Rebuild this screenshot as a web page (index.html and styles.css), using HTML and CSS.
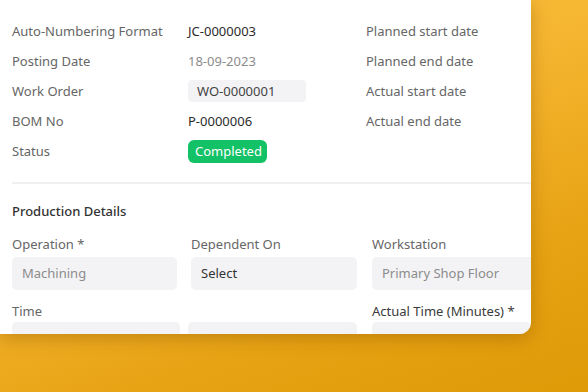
FILE: index.html
```html
<!DOCTYPE html>
<html lang="en">
<head>
  <meta charset="UTF-8" />
  <title>Job Card</title>
  <link rel="stylesheet" href="styles.css">
</head>
<body>
  <div class="card">
    <div class="info">
      <span class="label">Auto-Numbering Format</span>
      <span class="value">JC-0000003</span>
      <span class="label">Planned start date</span>

      <span class="label">Posting Date</span>
      <span class="value muted">18-09-2023</span>
      <span class="label">Planned end date</span>

      <span class="label">Work Order</span>
      <span class="value"><span class="chip">WO-0000001</span></span>
      <span class="label">Actual start date</span>

      <span class="label">BOM No</span>
      <span class="value">P-0000006</span>
      <span class="label">Actual end date</span>

      <span class="label">Status</span>
      <span class="value"><span class="badge">Completed</span></span>
      <span class="label"></span>
    </div>

    <div class="divider"></div>

    <div class="section">
      <h3>Production Details</h3>
      <div class="fields row-a">
        <div class="field">
          <label>Operation *</label>
          <div class="input muted">Machining</div>
        </div>
        <div class="field">
          <label>Dependent On</label>
          <div class="input">Select</div>
        </div>
        <div class="field">
          <label>Workstation</label>
          <div class="input muted">Primary Shop Floor</div>
        </div>
      </div>
      <div class="fields row-b">
        <div class="field">
          <label>Time</label>
          <div class="input"></div>
        </div>
        <div class="field">
          <label>&nbsp;</label>
          <div class="input"></div>
        </div>
        <div class="field">
          <label class="strong">Actual Time (Minutes) *</label>
          <div class="input"></div>
        </div>
      </div>
    </div>
  </div>
</body>
</html>
```

FILE: styles.css
```css
body {
  margin: 0;
  width: 588px;
  height: 392px;
  overflow: hidden;
  font-family: 'Noto Sans', sans-serif;
  font-size: 13px;
  color: #2b2b2b;
  background: linear-gradient(160deg, #fcc545 0%, #f5b530 40%, #e6a212 75%, #df9a08 100%);
}
.card {
  width: 531px;
  height: 334px;
  background: white;
  border-bottom-right-radius: 12px;
  box-shadow: 0 4px 18px rgba(120, 70, 0, 0.35);
  overflow: hidden;
}
.info {
  display: grid;
  grid-template-columns: 176px 178px 1fr;
  grid-auto-rows: 30px;
  align-items: center;
  padding: 16px 0 0 12px;
}
.label {
  color: #666;
}
.value {
  color: #2b2b2b;
}
.muted {
  color: #8c8c8c;
}
.chip {
  display: inline-block;
  width: 109px;
  height: 22px;
  line-height: 22px;
  padding-left: 9px;
  background: #f3f3f5;
  border-radius: 4px;
  color: #444;
}
.badge {
  display: inline-block;
  height: 23px;
  line-height: 23px;
  padding: 0 5px 0 7px;
  background: #13c166;
  color: white;
  border-radius: 6px;
}
.divider {
  height: 2px;
  background: #f0f0f0;
  margin: 16px 0 0 12px;
}
.section {
  padding-left: 12px;
}
h3 {
  margin: 17px 0 0;
  font-size: 13px;
  line-height: 20px;
  font-weight: 500;
  color: #333;
}
.fields {
  display: grid;
}
.row-a {
  grid-template-columns: 165px 166px 166px;
  column-gap: 14px;
  margin-top: 14px;
}
.row-a .field:last-child {
  margin-left: 1px;
}
.row-b {
  grid-template-columns: 168px 169px 166px;
  column-gap: 8px;
  margin-top: 12px;
}
.row-b .field:last-child {
  margin-left: 7px;
}
.field label {
  display: block;
  height: 18px;
  line-height: 18px;
  color: #666;
}
.field label.strong {
  color: #3a3a3a;
}
.row-a .input {
  margin-top: 4px;
}
.row-b .input {
  margin-top: 2px;
}
.input {
  height: 33px;
  line-height: 33px;
  padding-left: 10px;
  background: #f3f3f5;
  border-radius: 5px;
  white-space: nowrap;
  color: #333;
}
.input.muted {
  color: #8c8c8c;
}
```
